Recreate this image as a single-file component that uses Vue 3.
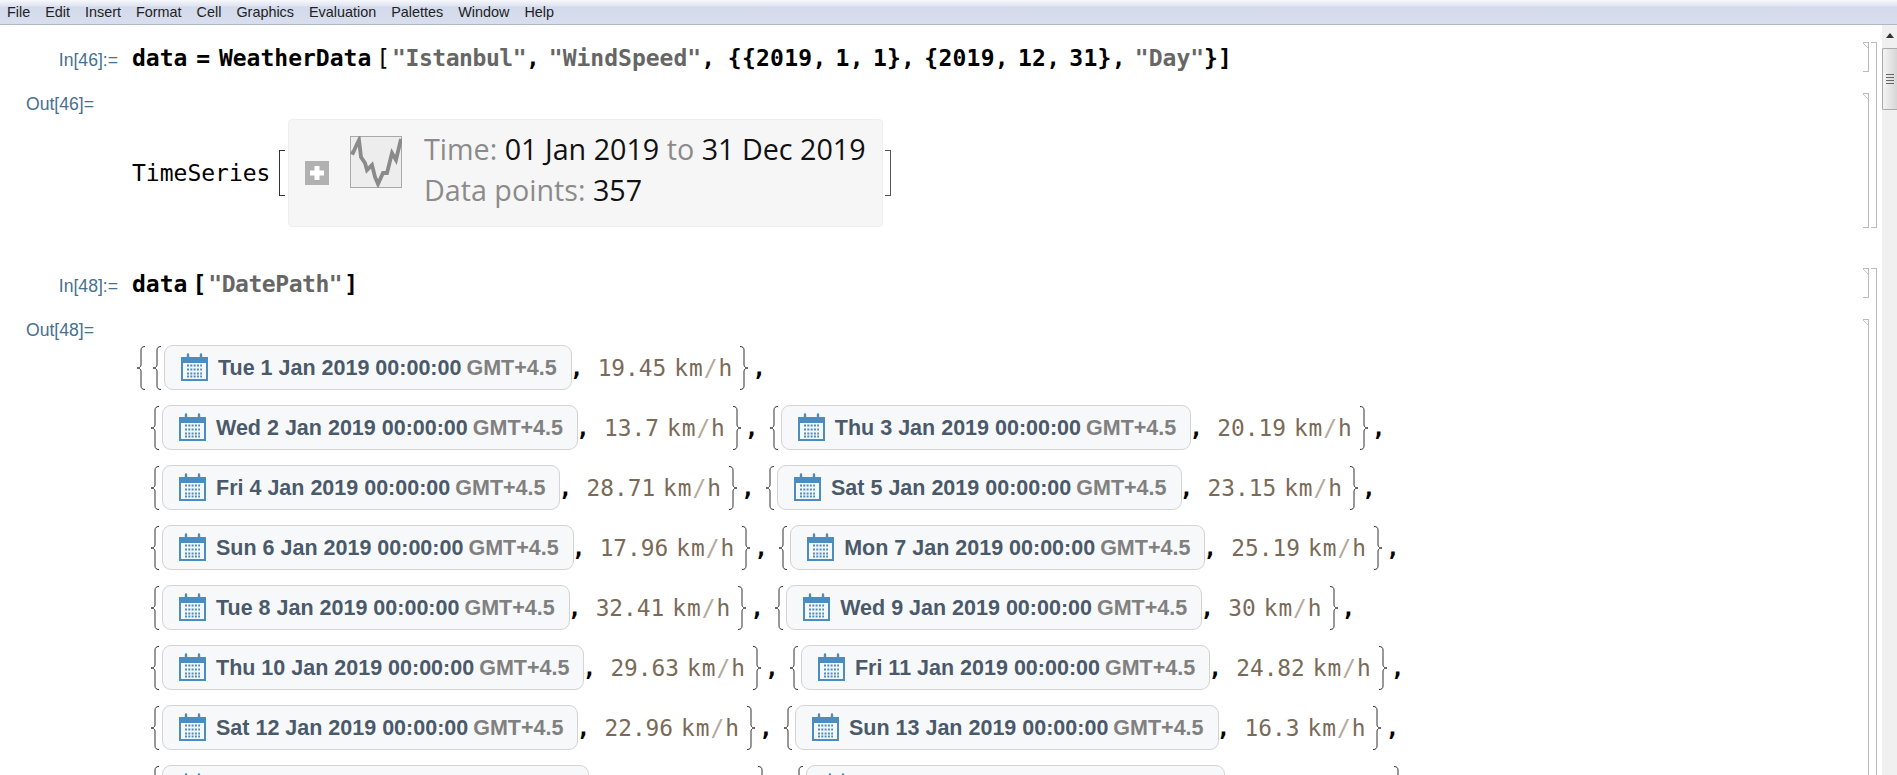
<script setup>
const rows = [
  [['Tue 1 Jan 2019', '19.45']],
  [['Wed 2 Jan 2019', '13.7'], ['Thu 3 Jan 2019', '20.19']],
  [['Fri 4 Jan 2019', '28.71'], ['Sat 5 Jan 2019', '23.15']],
  [['Sun 6 Jan 2019', '17.96'], ['Mon 7 Jan 2019', '25.19']],
  [['Tue 8 Jan 2019', '32.41'], ['Wed 9 Jan 2019', '30']],
  [['Thu 10 Jan 2019', '29.63'], ['Fri 11 Jan 2019', '24.82']],
  [['Sat 12 Jan 2019', '22.96'], ['Sun 13 Jan 2019', '16.3']],
  [['Mon 14 Jan 2019', '24.11'], ['Tue 15 Jan 2019', '21.08']]
]
const menus = ['File', 'Edit', 'Insert', 'Format', 'Cell', 'Graphics', 'Evaluation', 'Palettes', 'Window', 'Help']
const dates = '{{2019, 1, 1}, {2019, 12, 31}, '
const closing = '}]'
const leftBrace = 'M9 .5C6 .5 5 2 5 4V19C5 21 3 22 1 22C3 22 5 23 5 25V40C5 42 6 43.5 9 43.5'
const rightBrace = 'M1 .5C4 .5 5 2 5 4V19C5 21 7 22 9 22C7 22 5 23 5 25V40C5 42 4 43.5 1 43.5'
</script>

<template>
  <div class="app">
    <nav class="menubar">
      <span v-for="m in menus" :key="m">{{ m }}</span>
    </nav>
    <div class="main">
      <div class="notebook">
        <section class="group first">
          <div class="cell in-cell">
            <div class="label in-label">In[46]:=</div>
            <div class="code"><b>data = WeatherData</b><span class="br">[</span><b class="str narrow">"Istanbul"</b><b>, </b><b class="str">"WindSpeed"</b><b>, </b><b class="dates">{{ dates }}</b><b class="str">"Day"</b><b>{{ closing }}</b></div>
          </div>
          <div class="cell out-cell">
            <div class="label out-label">Out[46]=</div>
            <div class="series">
              <span class="series-name">TimeSeries</span>
              <span class="sq left"></span>
              <div class="summary">
                <svg class="plus" viewBox="0 0 24 24"><rect width="24" height="24" fill="#b1b1b1" /><path d="M12 5v14M5 12h14" stroke="#fff" stroke-width="5" /></svg>
                <svg class="thumb" viewBox="0 0 52 52"><rect x=".5" y=".5" width="51" height="51" fill="#ededed" stroke="#a9a9a9" /><path d="M1 16L3 17L7 8L9 4L11 21L15 27L17 34L22 29L25 41L28 48L33 37L37 37L42 17L46 24L51 3" fill="none" stroke="#8a8a8a" stroke-width="3.8" /></svg>
                <div class="facts">
                  <div><span class="key">Time: </span>01 Jan 2019 <span class="key">to</span> 31 Dec 2019</div>
                  <div><span class="key">Data points: </span>357</div>
                </div>
              </div>
              <span class="sq right"></span>
            </div>
          </div>
        </section>
        <section class="group second">
          <div class="cell in-cell">
            <div class="label in-label">In[48]:=</div>
            <div class="code"><b>data</b><b class="br">[</b><b class="str narrow">"DatePath"</b><b class="br end">]</b></div>
          </div>
          <div class="cell out-cell tall">
            <div class="label out-label">Out[48]=</div>
            <div class="list">
              <div v-for="(row, r) in rows" :key="r" class="row">
                <svg v-if="r === 0" class="brace outer" viewBox="0 0 10 44"><path :d="leftBrace" /></svg>
                <template v-for="(item, i) in row" :key="i">
                  <svg class="brace" viewBox="0 0 10 44"><path :d="leftBrace" /></svg>
                  <div class="chip">
                    <svg class="cal" viewBox="0 0 27 28">
                      <path d="M0 4h27v24H0z" fill="#4d8cbf" />
                      <path d="M2 10h23v16H2z" fill="#f5f8fb" />
                      <path d="M7 1.5v5M20 1.5v5" stroke="#4d8cbf" stroke-width="2.4" stroke-linecap="round" />
                      <path d="M6 12.5h15M6 16.5h15M6 20.5h15M6 23.6h15" stroke="#4d8cbf" stroke-width="2" stroke-dasharray="2 1.3" />
                    </svg>
                    <span class="date">{{ item[0] }} 00:00:00</span><span class="tz">GMT+4.5</span>
                  </div>
                  <span class="comma">,</span>
                  <span class="value">{{ item[1] }}</span>
                  <span class="unit">km<i>/</i>h</span>
                  <svg class="brace close" viewBox="0 0 10 44"><path :d="rightBrace" /></svg>
                  <span class="comma after">,</span>
                </template>
              </div>
            </div>
          </div>
        </section>
      </div>
      <aside class="scrollbar">
        <div class="arrow"></div>
        <div class="thumb-bar"><span></span><span></span><span></span><span></span></div>
      </aside>
    </div>
  </div>
</template>

<style scoped>
.app {
  height: 775px;
  display: flex;
  flex-direction: column;
  overflow: hidden;
  background: #fff;
}
.menubar {
  height: 25px;
  box-sizing: border-box;
  flex: none;
  display: flex;
  align-items: center;
  gap: 15px;
  padding: 0 0 0 7px;
  background: linear-gradient(#f7f8fb 0, #dfe4f0 6px, #d3daeb 7px, #d8deed 23px);
  border-bottom: 1px solid #b1b6c4;
  font: 14.4px "Liberation Sans", Arial, sans-serif;
  color: #222;
}
.main {
  flex: 1;
  min-height: 0;
  display: flex;
}
.notebook {
  flex: 1;
  min-width: 0;
  padding-right: 5px;
  overflow: hidden;
}
.group {
  position: relative;
  border-right: 1px solid #bbb;
  padding-right: 7px;
}
.group::before,
.group::after {
  content: "";
  position: absolute;
  right: 0;
  width: 5px;
  border-top: 1px solid #bbb;
}
.group::before { top: 0; }
.group::after { bottom: 0; }
.first { margin-top: 17px; height: 186px; }
.second { margin-top: 40px; height: 700px; }
.cell {
  position: relative;
  box-sizing: border-box;
  border-right: 1px solid #bbb;
  display: flex;
}
.cell::before {
  content: "";
  position: absolute;
  top: 0;
  right: 0;
  width: 5px;
  height: 5px;
  border-top: 1px solid #bbb;
  background: linear-gradient(to top right, transparent 44%, #c4c4c4 44%, #c4c4c4 58%, transparent 58%);
}
.cell::after {
  content: "";
  position: absolute;
  bottom: 0;
  right: 0;
  width: 5px;
  border-top: 1px solid #bbb;
}
.in-cell { height: 30px; }
.out-cell { height: 135px; margin-top: 21px; }
.tall { height: 600px; }
.label {
  flex: none;
  width: 132px;
  box-sizing: border-box;
  text-align: right;
  font: 17.6px "Liberation Sans", Arial, sans-serif;
  color: #48708f;
}
.in-label { padding: 8px 14px 0 0; }
.out-label { padding: 1px 38px 0 0; }
.code {
  font: 23px "DejaVu Sans Mono", monospace;
  word-spacing: -5px;
  white-space: pre;
  color: #000;
  line-height: 32px;
}
.code b { font-weight: 700; }
.code .str { color: #666; }
.code .narrow { letter-spacing: -.45px; }
.code .dates { letter-spacing: .25px; margin-left: 4px; }
.br { font-weight: 400; margin: 0 2px 0 5px; }
.br.end { margin: 0 0 0 2px; }
.series {
  margin: 26px 0 0 0;
  display: flex;
  align-items: center;
  height: 108px;
}
.series-name { font: 23px "DejaVu Sans Mono", monospace; color: #000; width: 147px; }
.sq {
  width: 5px;
  height: 44px;
  border: 1px solid #333;
  flex: none;
}
.sq.left { border-right: 0; }
.sq.right { border-left: 0; border-color: #555; margin-left: 2px; }
.summary {
  margin-left: 3px;
  width: 595px;
  height: 108px;
  box-sizing: border-box;
  background: #f6f6f6;
  border: 1px solid #eee;
  border-radius: 4px;
  display: flex;
  align-items: center;
  padding-left: 16px;
}
.plus { width: 24px; height: 24px; flex: none; margin-top: 0; }
.thumb { width: 52px; height: 52px; flex: none; margin: -22px 0 0 21px; }
.facts {
  margin-left: 22px;
  font: 28.7px/41px "Open Sans", sans-serif;
  color: #111;
  white-space: nowrap;
  margin-top: -9px;
}
.key { color: #8b8b8b; }
.list {
  margin: 26px 0 0 4px;
  flex: 1;
}
.row {
  height: 45px;
  margin-bottom: 15px;
  display: flex;
  align-items: center;
  padding-left: 14px;
}
.row:first-child { padding-left: 0; }
.brace {
  width: 10px;
  height: 44px;
  flex: none;
  margin-right: 2px;
  overflow: visible;
}
.brace.outer { margin-right: 6px; }
.brace path { fill: none; stroke: #333; stroke-width: 1; }
.brace.close { margin: 0 0 0 6px; }
.chip {
  height: 45px;
  box-sizing: border-box;
  display: flex;
  align-items: center;
  flex: none;
  padding: 0 14px 0 16px;
  background: #f7f8f9;
  border: 1px solid #d4d4d4;
  border-radius: 9px;
  font: 700 21.5px "Liberation Sans", Arial, sans-serif;
  white-space: nowrap;
}
.cal { width: 27px; height: 28px; flex: none; margin: -1px 10px 0 0; }
.date { color: #4a5a6a; padding-top: 1px; }
.tz { color: #808080; margin-left: 5px; padding-top: 1px; }
.comma {
  font: 700 23px "DejaVu Sans Mono", monospace;
  color: #000;
  width: 21px;
  margin-left: -2px;
  box-sizing: border-box;
  flex: none;
}
.comma.after { width: 27px; margin-left: 0; padding-left: 3px; }
.value, .unit {
  font: 22.8px "DejaVu Sans Mono", monospace;
  color: #7a6a58;
  margin-left: 7px;
  padding-top: 1px;
  white-space: nowrap;
}
.unit { margin-left: 8px; letter-spacing: 1px; }
.unit i { font-style: normal; color: #b3a99c; font-weight: 300; }
.scrollbar {
  flex: none;
  width: 15px;
  background: #f0f0f0;
  display: flex;
  flex-direction: column;
  align-items: center;
}
.arrow {
  margin-top: 8px;
  width: 0;
  height: 0;
  border: 4px solid transparent;
  border-top: 0;
  border-bottom: 5px solid #333;
}
.thumb-bar {
  margin-top: 10px;
  width: 100%;
  height: 62px;
  box-sizing: border-box;
  border: 1px solid #aaa;
  border-right: 0;
  border-radius: 2px 0 0 2px;
  background: linear-gradient(90deg, #f4f4f4, #d6d6d6);
  display: flex;
  flex-direction: column;
  justify-content: center;
  align-items: center;
  gap: 2px;
}
.thumb-bar span { display: block; width: 8px; height: 1px; background: #666; }
</style>

<style>
html, body { margin: 0; background: #fff; }
</style>
